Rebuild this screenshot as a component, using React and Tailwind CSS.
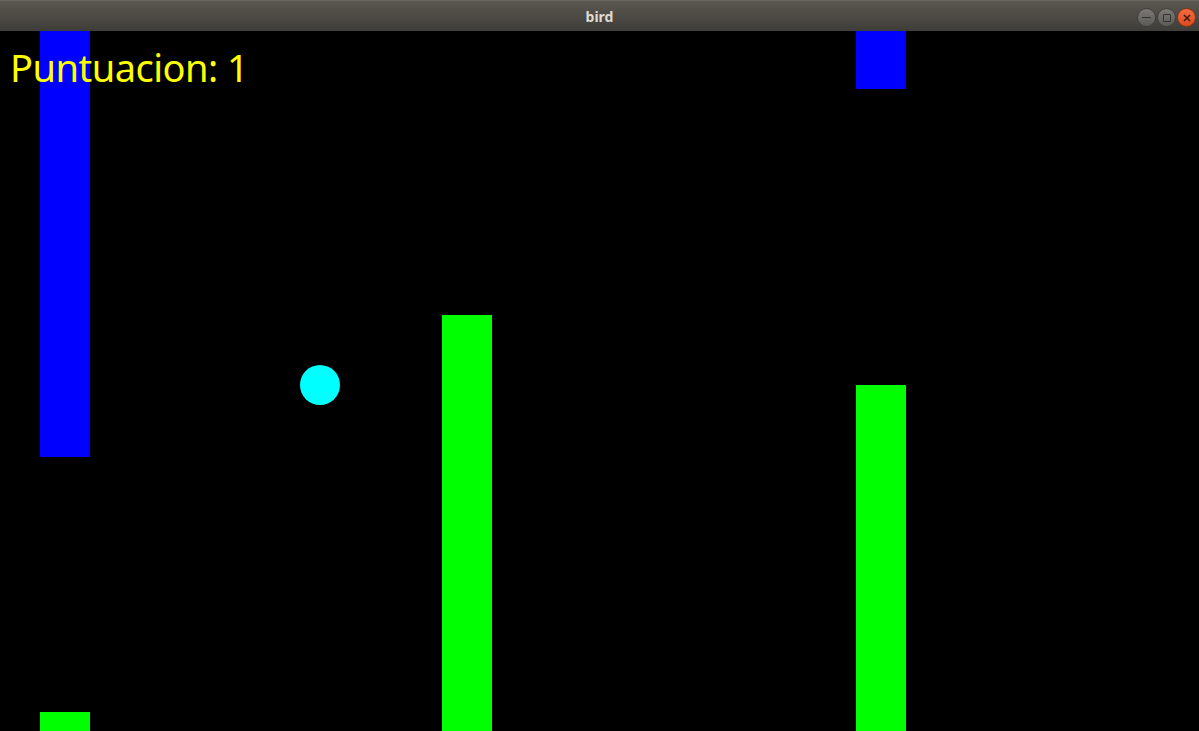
export default function App() {
  return (
    <div className="w-[1199px] h-[731px] flex flex-col bg-black overflow-hidden">
      <div className="relative h-[31px] shrink-0 bg-gradient-to-b from-[#5b5851] to-[#3f3d39] border-t border-[#6a675f] flex items-center justify-center">
        <span className="text-[14px] font-bold text-[#dfdbd2]" style={{ fontFamily: '"Noto Sans", Ubuntu, sans-serif' }}>bird</span>
        <div className="absolute right-[3px] top-[7px] flex gap-[1px]">
          <div className="w-[19px] h-[19px] rounded-full bg-gradient-to-b from-[#7a7975] to-[#5c5b57] border border-[#403f3b] flex items-center justify-center">
            <div className="w-[9px] h-[1.5px] bg-[#33322f]" />
          </div>
          <div className="w-[19px] h-[19px] rounded-full bg-gradient-to-b from-[#7a7975] to-[#5c5b57] border border-[#403f3b] flex items-center justify-center">
            <div className="w-[8px] h-[8px] border-[1.5px] border-[#33322f] rounded-[1px]" />
          </div>
          <div className="w-[19px] h-[19px] rounded-full bg-gradient-to-b from-[#f36b3f] to-[#dc4c1f] border border-[#8a3513] flex items-center justify-center">
            <svg width="8" height="8" viewBox="0 0 8 8"><path d="M1 1L7 7M7 1L1 7" stroke="#3a1a0a" strokeWidth="1.5" /></svg>
          </div>
        </div>
      </div>
      <div className="relative flex-1 bg-black">
        <div className="absolute left-[40px] top-0 w-[50px] h-[426px] bg-[#0000ff]" />
        <div className="absolute left-[40px] top-[681px] w-[50px] h-[19px] bg-[#00ff00]" />
        <div className="absolute left-[442px] top-[284px] w-[50px] h-[416px] bg-[#00ff00]" />
        <div className="absolute left-[856px] top-0 w-[50px] h-[58px] bg-[#0000ff]" />
        <div className="absolute left-[856px] top-[354px] w-[50px] h-[346px] bg-[#00ff00]" />
        <div className="absolute left-[300px] top-[334px] w-[40px] h-[40px] rounded-full bg-[#00ffff]" />
        <div className="absolute left-[10px] top-[8px] text-[38px] leading-[56px] tracking-[-0.5px] text-[#ffff00]" style={{ fontFamily: '"Noto Sans", sans-serif' }}>Puntuacion: 1</div>
      </div>
    </div>
  );
}
